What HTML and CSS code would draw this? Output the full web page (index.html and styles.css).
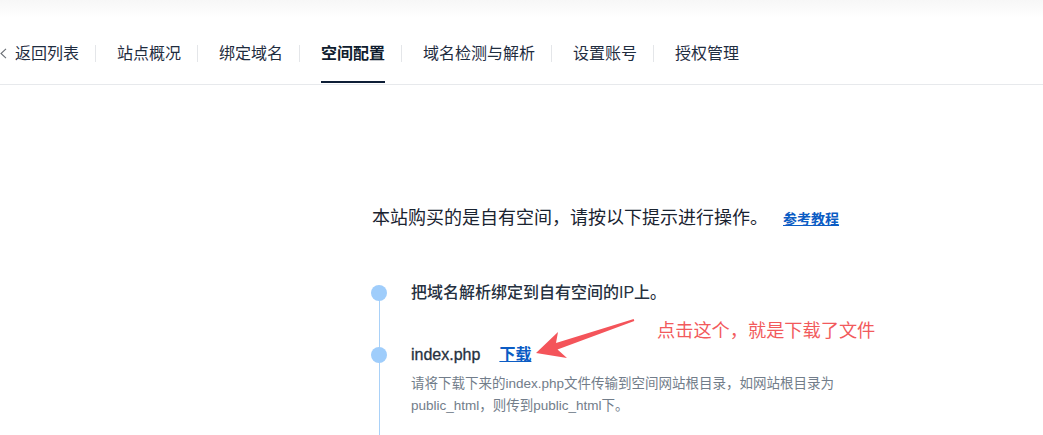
FILE: index.html
```html
<!DOCTYPE html>
<html lang="zh-CN">
<head>
<meta charset="utf-8">
<title>空间配置</title>
<link rel="stylesheet" href="styles.css">
</head>
<body>
<div class="page">
  <nav class="tabs">
    <a class="tab back"><svg class="chev" width="7" height="11" viewBox="0 0 7 11"><polyline points="6,0.8 1,5.5 6,10.2" fill="none" stroke="#6b6f75" stroke-width="1.1"/></svg>返回列表</a>
    <span class="sep"></span>
    <a class="tab">站点概况</a>
    <span class="sep"></span>
    <a class="tab">绑定域名</a>
    <span class="sep"></span>
    <a class="tab active">空间配置</a>
    <span class="sep"></span>
    <a class="tab">域名检测与解析</a>
    <span class="sep"></span>
    <a class="tab">设置账号</a>
    <span class="sep"></span>
    <a class="tab">授权管理</a>
  </nav>

  <section class="content">
    <div class="intro">
      <span class="intro-text">本站购买的是自有空间，请按以下提示进行操作。</span>
      <a class="ref-link">参考教程</a>
    </div>

    <div class="steps">
      <div class="step first">
        <div class="rail"><span class="dot"></span></div>
        <div class="step-body">
          <div class="step-title">把域名解析绑定到自有空间的IP上。</div>
        </div>
      </div>
      <div class="step">
        <div class="rail"><span class="dot"></span></div>
        <div class="step-body last">
          <div class="step-title"><span class="file-name">index.php</span><a class="dl-link">下载</a></div>
          <p class="step-desc">请将下载下来的index.php文件传输到空间网站根目录，如网站根目录为public_html，则传到public_html下。</p>
        </div>
      </div>
    </div>
  </section>

  <svg class="arrow" width="1043" height="435" viewBox="0 0 1043 435">
    <polygon fill="#f4545a" points="536,353 558,332 556,343 633.7,319 634.3,321 557.5,349.5 567,358"/>
  </svg>
  <div class="note">点击这个，就是下载了文件</div>
</div>
</body>
</html>
```

FILE: styles.css
```css
html, body {
  margin: 0;
  padding: 0;
  background: #ffffff;
}

body {
  font-family: "Liberation Sans", "Noto Sans CJK SC", sans-serif;
  color: #1f2b3a;
}

.page {
  position: relative;
  width: 1043px;
  height: 435px;
}

/* ---------- tabs ---------- */
.tabs {
  display: flex;
  height: 62px;
  padding-top: 22px;
  border-bottom: 1px solid #e7e9ec;
  background: linear-gradient(#f7f7f7, #ffffff 18px);
}

.tab {
  position: relative;
  display: flex;
  align-items: center;
  padding-top: 1px;
  font-size: 16px;
  line-height: 22px;
  color: #1f2d3f;
  white-space: nowrap;
  cursor: pointer;
}

.tab.active {
  font-weight: 700;
  color: #0f1c2e;
}

.tab.active::after {
  content: "";
  position: absolute;
  left: 0;
  right: 0;
  bottom: 1px;
  height: 2px;
  background: #0d1e36;
}

.chev {
  display: block;
  margin-right: 8px;
}

.sep {
  align-self: center;
  width: 1px;
  height: 17px;
  margin: 0 21px 0 16px;
  background: #e4e6e9;
}

/* ---------- content ---------- */
.content {
  padding: 120px 0 0 371px;
}

.intro {
  display: flex;
  align-items: baseline;
  margin-left: 1px;
}

.intro-text {
  font-size: 18px;
  line-height: 26px;
  color: #1a2330;
}

.ref-link {
  margin-left: 15px;
  font-size: 14px;
  font-weight: 700;
  color: #0b5cc4;
  text-decoration: underline;
  cursor: pointer;
}

.steps {
  margin-top: 49px;
}

.step {
  display: grid;
  grid-template-columns: 17px 1fr;
  column-gap: 23px;
}

.rail {
  background: linear-gradient(#a9d1f8, #a9d1f8) no-repeat;
  background-size: 1px 100%;
  background-position: 8px 0;
}

.step.first .rail {
  background-size: 1px calc(100% - 12px);
  background-position: 8px 100%;
}

.dot {
  display: block;
  width: 16px;
  height: 16px;
  margin-top: 5px;
  border-radius: 50%;
  background: #9fcdfb;
}

.step-body {
  padding-bottom: 37px;
}

.step-body.last {
  padding-bottom: 19px;
}

.step-title {
  padding-top: 1px;
  font-size: 16px;
  line-height: 24px;
  font-weight: 500;
  color: #263140;
}

.file-name {
  -webkit-text-stroke: 0.3px #263140;
}

.dl-link {
  margin-left: 19px;
  font-weight: 700;
  color: #0b5cc4;
  text-decoration: underline;
  cursor: pointer;
}

.step-desc {
  margin: 6px 0 0;
  max-width: 440px;
  font-size: 13.5px;
  line-height: 22px;
  color: #727d8a;
}

/* ---------- annotation overlay ---------- */
.arrow {
  position: absolute;
  left: 0;
  top: 0;
  pointer-events: none;
}

.note {
  position: absolute;
  left: 657px;
  top: 319px;
  font-size: 18.2px;
  line-height: 24px;
  color: #f25a5c;
  white-space: nowrap;
}
```
